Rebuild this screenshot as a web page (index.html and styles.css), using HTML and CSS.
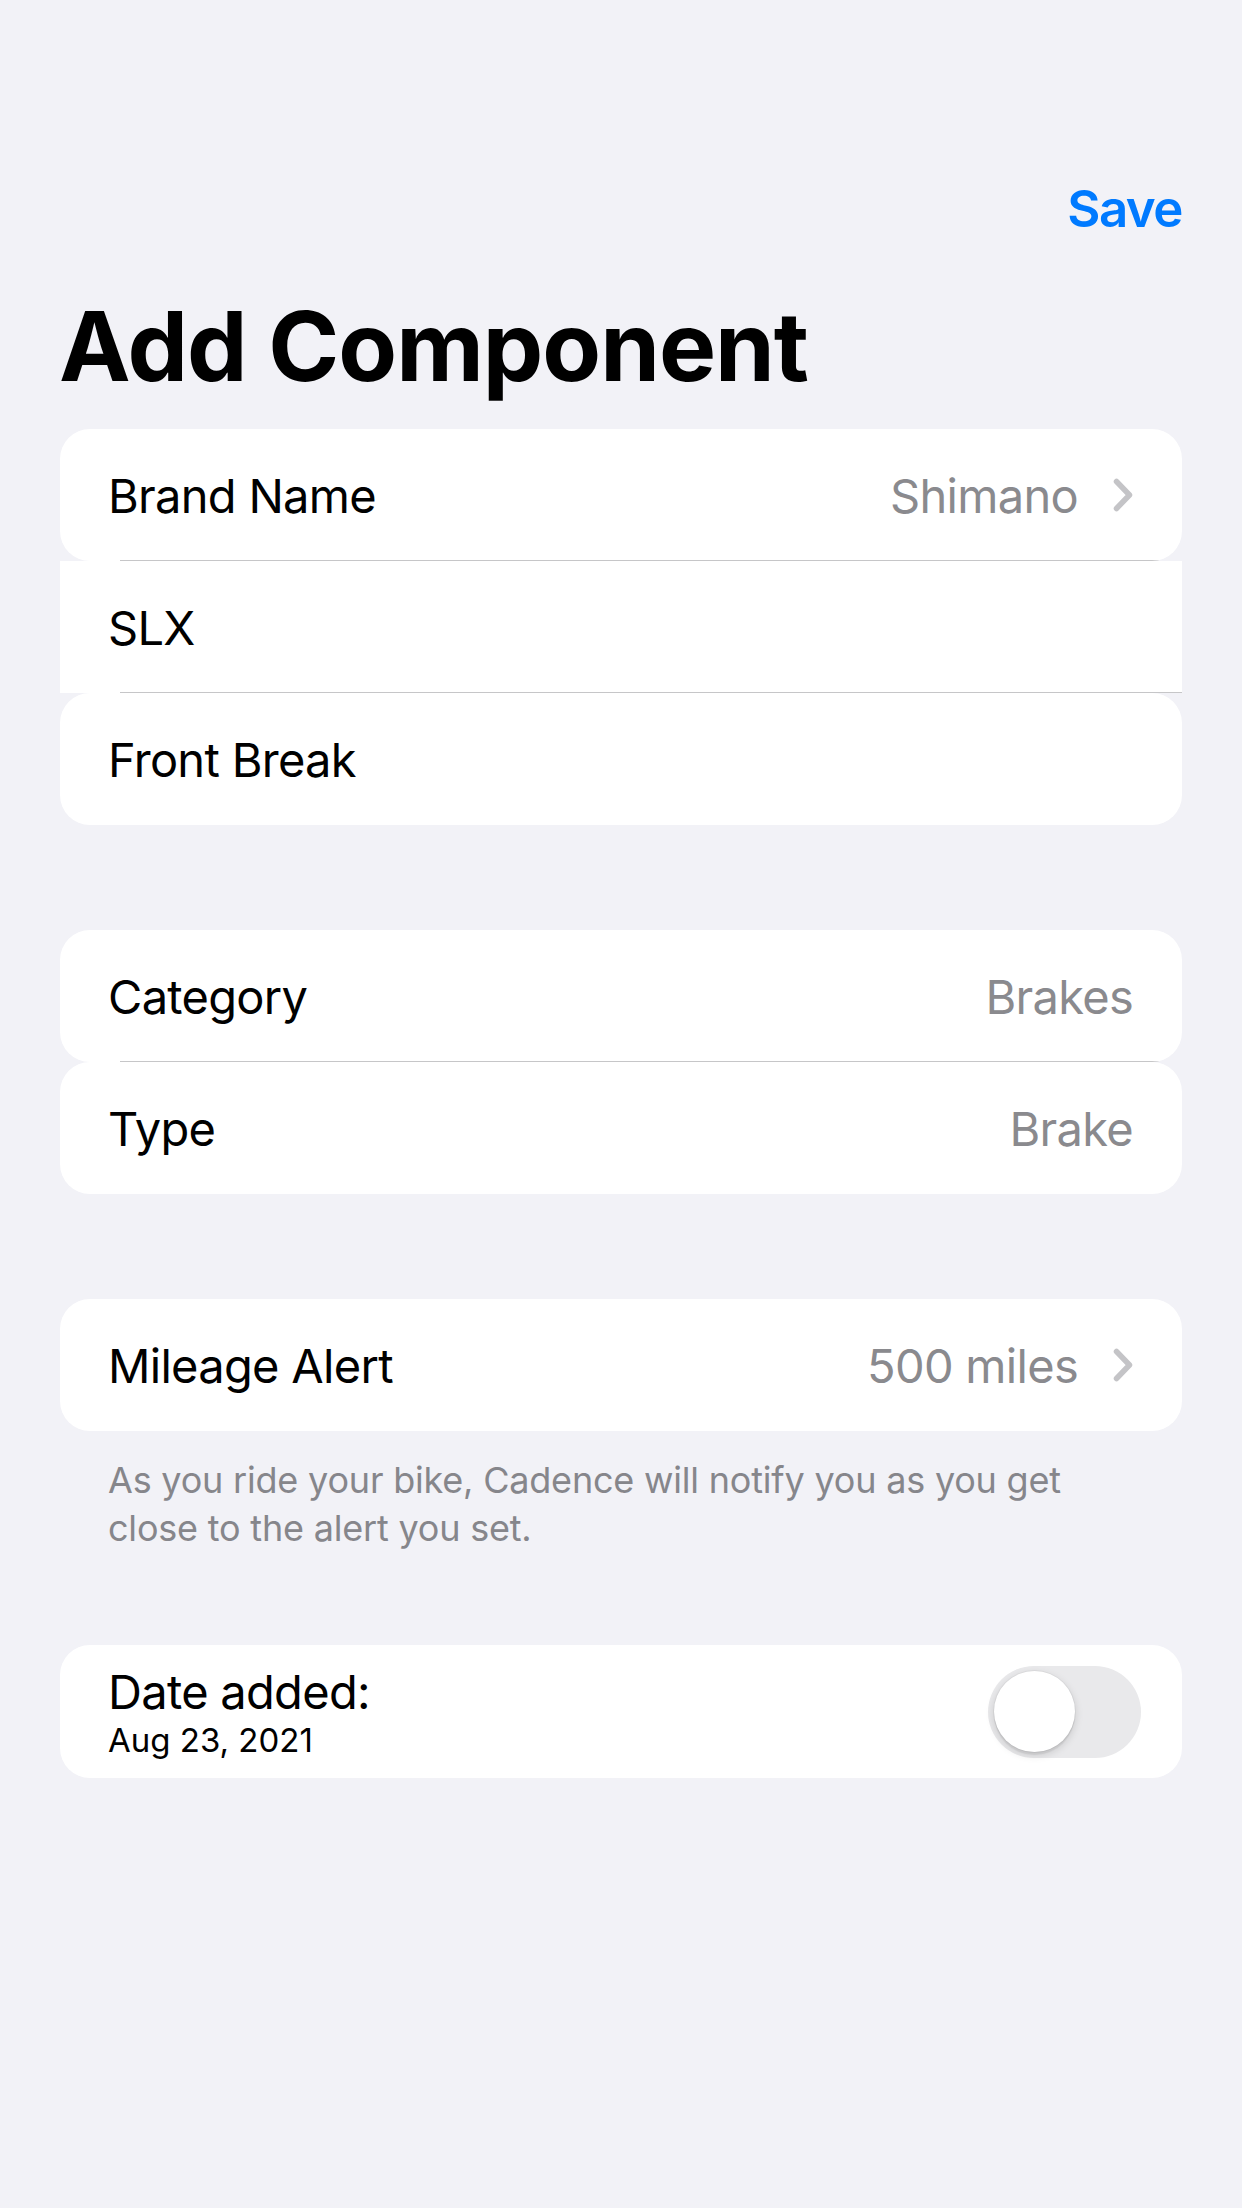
FILE: index.html
```html
<!DOCTYPE html>
<html lang="en">
<head>
<meta charset="utf-8">
<title>Add Component</title>
<link rel="stylesheet" href="styles.css">
</head>
<body>
<div class="page">
  <div class="navbar"><span class="save">Save</span></div>
  <h1 class="title">Add Component</h1>

  <div class="section">
    <div class="row rounded sep">
      <span class="label">Brand Name</span>
      <span class="value">Shimano</span>
      <svg class="chev" width="20" height="34" viewBox="0 0 20 34"><polyline points="3.5,3.5 16.5,17 3.5,30.5" fill="none" stroke="#c4c4c7" stroke-width="5.5" stroke-linecap="round" stroke-linejoin="round"/></svg>
    </div>
    <div class="row sep">
      <span class="label">SLX</span>
    </div>
    <div class="row rounded">
      <span class="label">Front Break</span>
    </div>
  </div>

  <div class="section">
    <div class="row rounded sep">
      <span class="label">Category</span>
      <span class="value">Brakes</span>
    </div>
    <div class="row rounded">
      <span class="label">Type</span>
      <span class="value">Brake</span>
    </div>
  </div>

  <div class="section footer-section">
    <div class="row rounded">
      <span class="label">Mileage Alert</span>
      <span class="value">500 miles</span>
      <svg class="chev" width="20" height="34" viewBox="0 0 20 34"><polyline points="3.5,3.5 16.5,17 3.5,30.5" fill="none" stroke="#c4c4c7" stroke-width="5.5" stroke-linecap="round" stroke-linejoin="round"/></svg>
    </div>
    <p class="footer">As you ride your bike, Cadence will notify you as you get close to the alert you set.</p>
  </div>

  <div class="section date-section">
    <div class="row rounded date-row">
      <div class="date-text">
        <div class="date-label">Date added:</div>
        <div class="date-value">Aug 23, 2021</div>
      </div>
      <div class="toggle"><div class="knob"></div></div>
    </div>
  </div>
</div>
</body>
</html>
```

FILE: styles.css
```css
html, body {
  margin: 0;
  padding: 0;
  background: #f2f2f7;
}
body {
  width: 1242px;
  height: 2208px;
  font-family: Inter, "Noto Sans", sans-serif;
  color: #000;
}
.page {
  padding: 0 60px;
}
.navbar {
  padding-top: 178px;
  height: 61px;
  display: flex;
  justify-content: flex-end;
}
.save {
  font-size: 51px;
  line-height: 61px;
  font-weight: 600;
  color: #007aff;
  letter-spacing: -1.5px;
}
.title {
  margin: 49px 0 25px;
  font-size: 96px;
  line-height: 116px;
  font-weight: 700;
  letter-spacing: -1px;
  margin-left: -1px;
}
.section {
  margin-bottom: 105px;
}
.row {
  position: relative;
  height: 132px;
  background: #fff;
  display: flex;
  align-items: center;
  padding: 0 49px 0 48px;
  overflow: hidden;
  font-size: 47px;
  letter-spacing: -0.7px;
}
.row.rounded {
  border-radius: 30px;
}
.row.sep::after {
  content: "";
  position: absolute;
  left: 60px;
  right: 0;
  bottom: 0;
  height: 1px;
  background: #c6c6c8;
}
.label {
  flex: 1;
}
.value {
  color: #8a8a8e;
}
.chev {
  margin-left: 35px;
  flex: none;
}
.footer {
  margin: 25px 0 0;
  padding: 0 48px;
  font-size: 36px;
  line-height: 48px;
  color: #86868b;
  letter-spacing: -0.2px;
}
.footer-section {
  margin-bottom: 0;
}
.date-section {
  margin-top: 93px;
}
.date-row {
  height: 133px;
  padding-right: 41px;
}
.date-text {
  flex: 1;
}
.date-label {
  font-size: 47px;
  line-height: 56px;
}
.date-value {
  font-size: 33px;
  line-height: 40px;
  letter-spacing: 0;
}
.toggle {
  width: 153px;
  height: 92px;
  border-radius: 46px;
  background: #e9e9eb;
  display: flex;
  align-items: center;
  padding: 0 6px;
  box-sizing: border-box;
}
.knob {
  width: 81px;
  height: 81px;
  border-radius: 50%;
  background: #fff;
  box-shadow: 0 3px 8px rgba(0,0,0,0.15), 0 3px 1px rgba(0,0,0,0.06), 0 0 0 1px rgba(0,0,0,0.04);
}
```
